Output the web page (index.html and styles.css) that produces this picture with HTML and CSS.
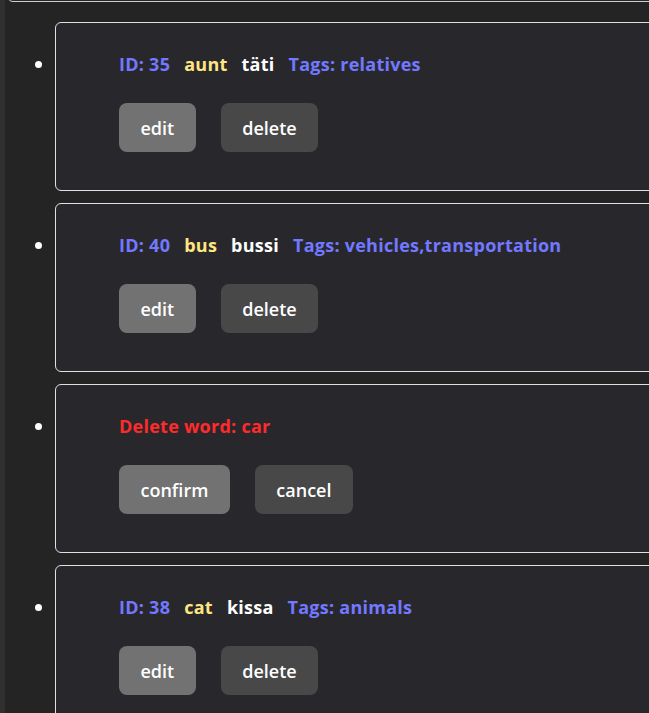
FILE: index.html
```html
<!DOCTYPE html>
<html>
<head>
<meta charset="utf-8">
<link rel="stylesheet" href="styles.css">
</head>
<body>
<div class="page">
  <div class="prev-box"></div>
  <ul class="word-list">
    <li class="item">
      <div class="card">
        <div class="info">
          <span class="id">ID: 35</span>
          <span class="en">aunt</span>
          <span class="fi">täti</span>
          <span class="tags">Tags: relatives</span>
        </div>
        <div class="actions">
          <button class="btn btn-light">edit</button>
          <button class="btn btn-dark">delete</button>
        </div>
      </div>
    </li>
    <li class="item">
      <div class="card">
        <div class="info">
          <span class="id">ID: 40</span>
          <span class="en">bus</span>
          <span class="fi">bussi</span>
          <span class="tags">Tags: vehicles,transportation</span>
        </div>
        <div class="actions">
          <button class="btn btn-light">edit</button>
          <button class="btn btn-dark">delete</button>
        </div>
      </div>
    </li>
    <li class="item">
      <div class="card">
        <div class="info">
          <span class="warn">Delete word: car</span>
        </div>
        <div class="actions">
          <button class="btn btn-light">confirm</button>
          <button class="btn btn-dark">cancel</button>
        </div>
      </div>
    </li>
    <li class="item">
      <div class="card">
        <div class="info">
          <span class="id">ID: 38</span>
          <span class="en">cat</span>
          <span class="fi">kissa</span>
          <span class="tags">Tags: animals</span>
        </div>
        <div class="actions">
          <button class="btn btn-light">edit</button>
          <button class="btn btn-dark">delete</button>
        </div>
      </div>
    </li>
  </ul>
</div>
</body>
</html>
```
FILE: styles.css
```css
html, body {
  margin: 0;
  padding: 0;
  height: 100%;
  overflow: hidden;
  background: #242424;
}
body {
  font-family: "Open Sans", "Noto Sans", sans-serif;
  color: #fff;
  border-left: 5px solid #303030;
  box-sizing: border-box;
}
.page {
  padding-left: 2px;
}
.prev-box {
  height: 20px;
  margin-top: -20px;
  margin-right: -40px;
  border: 1px solid #cfcfcf;
  border-radius: 6px;
  background: #28282c;
}
.word-list {
  list-style: disc;
  margin: 0;
  padding: 20px 0 0 48px;
  width: 680px;
}
.item {
  font-size: 19px;
  margin-bottom: 12px;
}
.item::marker {
  color: #fff;
}
.card {
  border: 1px solid #e0e0e0;
  border-radius: 6px;
  background: #28282c;
  padding: 29px 0 38px 63px;
}
.info {
  font-size: 18px;
  font-weight: 700;
  line-height: 24px;
  letter-spacing: 0.25px;
  white-space: nowrap;
  display: flex;
  gap: 14px;
}
.id, .tags { color: #7278ff; }
.en { color: #ffe682; }
.fi { color: #ffffff; }
.warn { color: #ff2b2b; }
.actions {
  display: flex;
  gap: 25px;
  margin-top: 27px;
}
.btn {
  font-family: "Open Sans", "Noto Sans", sans-serif;
  font-size: 18px;
  font-weight: 600;
  line-height: 25px;
  color: #fff;
  border: 1px solid transparent;
  border-radius: 8px;
  padding: 12px 20.5px 10px;
  cursor: pointer;
}
.btn-light { background: #727272; }
.btn-dark { background: #484848; }
```
